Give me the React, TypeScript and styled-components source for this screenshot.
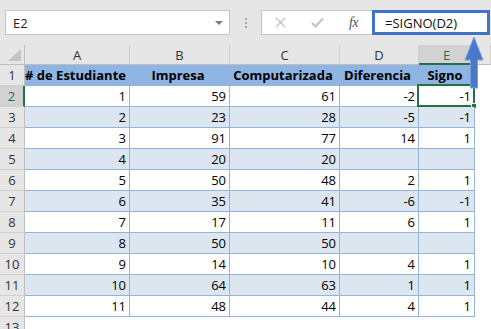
import React from "react";
import styled, { createGlobalStyle } from "styled-components";

const Global = createGlobalStyle`
  html, body { margin: 0; padding: 0; background: #ffffff; }
  body { font-family: "Open Sans", "Liberation Sans", sans-serif; overflow: hidden; }
  * { box-sizing: border-box; }
`;

const Page = styled.div`
  position: relative;
  width: 491px;
  height: 329px;
  overflow: hidden;
  background: #fff;
`;

const Toolbar = styled.div`
  height: 45px;
  background: #e6e6e6;
  display: flex;
  align-items: flex-start;
  padding: 10px 0 0 5px;
`;

const NameBox = styled.div`
  width: 225px;
  height: 25px;
  background: #fff;
  border: 1px solid #c6c6c6;
  display: flex;
  align-items: center;
  justify-content: space-between;
  padding: 0 6px 0 7px;
  font-size: 13px;
  color: #222;
`;

const Caret = styled.span`
  width: 0;
  height: 0;
  border-left: 4px solid transparent;
  border-right: 4px solid transparent;
  border-top: 4px solid #7a7a7a;
`;

const Grip = styled.div`
  width: 31px;
  height: 25px;
  display: flex;
  flex-direction: column;
  align-items: center;
  justify-content: center;
  gap: 2px;
  & > span {
    width: 2px;
    height: 2px;
    background: #a8a8a8;
  }
`;

const FxBox = styled.div`
  width: 111px;
  height: 25px;
  background: #fff;
  border: 1px solid #c6c6c6;
  border-right: none;
  display: flex;
  align-items: center;
  padding-left: 12px;
  gap: 0;
`;

const FxIcon = styled.span<{ $w: number }>`
  width: ${(p) => p.$w}px;
  display: flex;
  align-items: center;
  justify-content: center;
`;

const FxText = styled.span`
  font-family: "Liberation Serif", "DejaVu Serif", serif;
  font-style: italic;
  font-size: 14px;
  color: #555;
  letter-spacing: -0.5px;
`;

const Formula = styled.div`
  width: 118px;
  height: 25px;
  background: #fff;
  border: 3px solid #4472c4;
  display: flex;
  align-items: center;
  padding-left: 10px;
  font-size: 13px;
  color: #111;
`;

const Sheet = styled.div`
  display: grid;
  grid-template-columns: 25px 105px 100px 110px 79px 56px 1fr;
  grid-auto-rows: 21px;
  grid-template-rows: 20px;
`;

const Corner = styled.div`
  background: #e6e6e6;
  border-right: 1px solid #bfbfbf;
  border-bottom: 1px solid #bfbfbf;
  position: relative;
  display: flex;
  align-items: flex-end;
  justify-content: flex-end;
  padding: 0 3px 3px 0;
`;

const ColHead = styled.div<{ $active?: boolean }>`
  background: ${(p) => (p.$active ? "#d2d2d2" : "#e6e6e6")};
  border-right: 1px solid #cfcfcf;
  border-bottom: ${(p) => (p.$active ? "2px solid #217346" : "1px solid #bfbfbf")};
  display: flex;
  align-items: center;
  justify-content: center;
  font-size: 13px;
  padding-top: 1px;
  color: ${(p) => (p.$active ? "#217346" : "#333")};
`;

const RowHead = styled.div<{ $active?: boolean }>`
  background: ${(p) => (p.$active ? "#d2d2d2" : "#e6e6e6")};
  border-right: ${(p) => (p.$active ? "2px solid #217346" : "1px solid #bfbfbf")};
  border-bottom: 1px solid #cfcfcf;
  display: flex;
  align-items: center;
  justify-content: center;
  font-size: 13px;
  color: ${(p) => (p.$active ? "#217346" : "#333")};
`;

const Cell = styled.div<{ $band: "head" | "odd" | "even"; $sel?: boolean }>`
  position: relative;
  background: ${(p) => (p.$band === "head" ? "#8db4e2" : p.$band === "odd" ? "#dce6f1" : "#ffffff")};
  border-right: 1px solid ${(p) => (p.$band === "head" ? "#8db4e2" : "#95b3d7")};
  border-bottom: 1px solid #95b3d7;
  display: flex;
  align-items: center;
  justify-content: ${(p) => (p.$band === "head" ? "center" : "flex-end")};
  padding-right: 3px;
  font-size: 13px;
  font-weight: ${(p) => (p.$band === "head" ? 700 : 400)};
  color: #000;
  white-space: nowrap;
  overflow: visible;
`;

const Blank = styled.div`
  background: #fff;
`;

const Selection = styled.div`
  position: absolute;
  left: -2px;
  top: -2px;
  right: -1px;
  bottom: -1px;
  border: 2px solid #217346;
  pointer-events: none;
`;

const Handle = styled.div`
  position: absolute;
  right: -4px;
  bottom: -4px;
  width: 6px;
  height: 6px;
  background: #217346;
  border: 1px solid #fff;
`;

const Arrow = styled.svg`
  position: absolute;
  left: 463px;
  top: 36px;
`;

type Row = [number, number, number, number | "", number | ""];
const rows: Row[] = [
  [1, 59, 61, -2, -1],
  [2, 23, 28, -5, -1],
  [3, 91, 77, 14, 1],
  [4, 20, 20, "", ""],
  [5, 50, 48, 2, 1],
  [6, 35, 41, -6, -1],
  [7, 17, 11, 6, 1],
  [8, 50, 50, "", ""],
  [9, 14, 10, 4, 1],
  [10, 64, 63, 1, 1],
  [11, 48, 44, 4, 1],
];

const headers = ["# de Estudiante", "Impresa", "Computarizada", "Diferencia", "Signo"];
const letters = ["A", "B", "C", "D", "E"];

export default function App() {
  return (
    <Page>
      <Global />
      <Toolbar>
        <NameBox>
          <span>E2</span>
          <Caret />
        </NameBox>
        <Grip>
          <span />
          <span />
          <span />
        </Grip>
        <FxBox>
          <FxIcon $w={13}>
            <svg width="11" height="11" viewBox="0 0 11 11">
              <path d="M1 1 L10 10 M10 1 L1 10" stroke="#c2c2c2" strokeWidth="1.4" />
            </svg>
          </FxIcon>
          <FxIcon $w={60}>
            <svg width="13" height="11" viewBox="0 0 13 11">
              <path d="M1 6 L4.5 9.5 L12 1.5" stroke="#c2c2c2" strokeWidth="2" fill="none" />
            </svg>
          </FxIcon>
          <FxIcon $w={13}>
            <FxText>fx</FxText>
          </FxIcon>
        </FxBox>
        <Formula>=SIGNO(D2)</Formula>
      </Toolbar>
      <Sheet>
        <Corner>
          <svg width="13" height="12" viewBox="0 0 13 12">
            <path d="M13 0 L13 12 L0 12 Z" fill="#c4c4c4" />
          </svg>
        </Corner>
        {letters.map((l) => (
          <ColHead key={l} $active={l === "E"}>
            {l}
          </ColHead>
        ))}
        <ColHead />
        <RowHead>1</RowHead>
        {headers.map((h) => (
          <Cell key={h} $band="head">
            {h}
          </Cell>
        ))}
        <Blank />
        {rows.map((r, i) => {
          const band = i % 2 === 1 ? "odd" : "even";
          return (
            <React.Fragment key={i}>
              <RowHead $active={i === 0}>{i + 2}</RowHead>
              {r.map((v, j) => (
                <Cell key={j} $band={band}>
                  {v}
                  {i === 0 && j === 4 && (
                    <Selection>
                      <Handle />
                    </Selection>
                  )}
                </Cell>
              ))}
              <Blank />
            </React.Fragment>
          );
        })}
        <RowHead>13</RowHead>
      </Sheet>
      <Arrow width="24" height="54" viewBox="0 0 24 54">
        <path
          d="M11 1 L20 24 L14.5 24 L14.5 52 L7.5 52 L7.5 24 L2 24 Z"
          fill="#4a78c8"
          stroke="#7a9fdc"
          strokeWidth="1"
        />
      </Arrow>
    </Page>
  );
}
